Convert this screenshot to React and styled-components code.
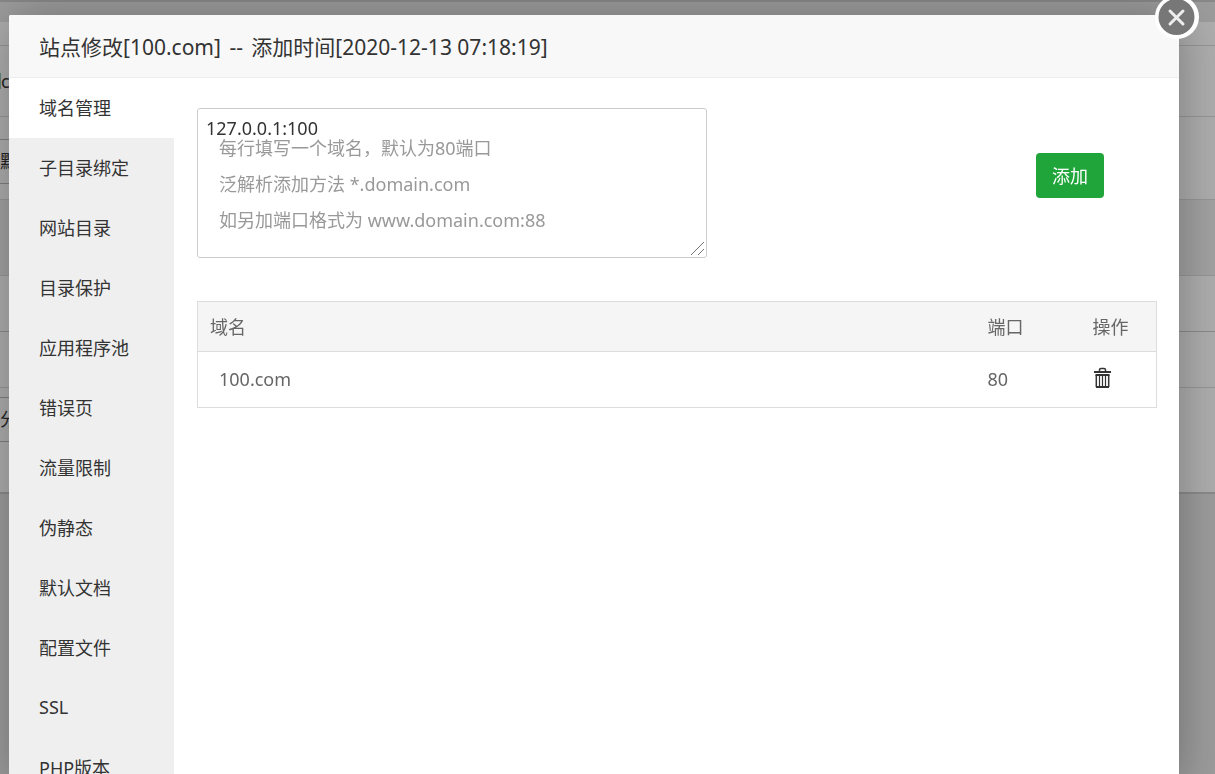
import { useState } from "react";
import styled, { createGlobalStyle } from "styled-components";

const GlobalStyle = createGlobalStyle`
  * {
    box-sizing: border-box;
  }

  body {
    margin: 0;
    overflow: hidden;
    background-color: #e6e6e6;
    color: #333;
    font-family: "Noto Sans", "Noto Sans CJK SC", sans-serif;
    font-size: 18px;
  }
`;

const Page = styled.div`
  padding-top: 20px;
  border-top: 2px solid #c8c8c8;
`;

const Panel = styled.section`
  background-color: #fff;
  border-bottom: 2px solid #ccc;
`;

const PanelRow = styled.div`
  display: flex;
  align-items: ${({ $align }) => $align || "center"};
  height: ${({ $height }) => $height}px;
  padding-top: ${({ $top }) => $top || 0}px;
  border-bottom: 1px solid ${({ $line }) => $line || "#ddd"};
  background-color: ${({ $shaded }) => ($shaded ? "#eee" : "transparent")};
  white-space: nowrap;
`;

const PanelLabel = styled.span`
  border-left: 1px solid #8fc8bb;
  line-height: 16px;
`;

const PanelField = styled.span`
  width: 120px;
  border: 1px solid #bbb;
  border-left: none;
  line-height: 43px;
`;

const Overlay = styled.div`
  position: fixed;
  inset: 0;
  padding: 15px 36px 0 9px;
  background-color: rgba(0, 0, 0, 0.32);
`;

const Dialog = styled.div`
  position: relative;
  display: flex;
  flex-direction: column;
  height: 100vh;
  border-radius: 2px;
  background-color: #fff;
  box-shadow: 1px 1px 50px rgba(0, 0, 0, 0.3);
`;

const DialogTitle = styled.h1`
  flex: none;
  margin: 0;
  padding: 2px 30px 0;
  border-bottom: 1px solid #eee;
  border-radius: 2px 2px 0 0;
  background-color: #f8f8f8;
  font-size: 21px;
  font-weight: 400;
  line-height: 60px;

  span {
    padding: 0 3px;
  }
`;

const CloseButton = styled.button`
  position: absolute;
  top: -20px;
  right: -20px;
  display: flex;
  padding: 0;
  border: none;
  background: none;
  cursor: pointer;
`;

const DialogBody = styled.div`
  display: flex;
  flex: 1;
  min-height: 0;
`;

const Menu = styled.nav`
  flex: none;
  width: 165px;
  overflow: hidden;
  background-color: #efefef;
`;

const MenuItem = styled.button`
  display: block;
  width: 100%;
  height: 60px;
  padding: 0 30px 2px;
  border: none;
  background-color: ${({ $active }) => ($active ? "#fff" : "transparent")};
  color: #333;
  font: inherit;
  text-align: left;
  cursor: pointer;
`;

const Content = styled.main`
  flex: 1;
  padding: 30px 22px 30px 23px;
`;

const AddForm = styled.form`
  display: flex;
  align-items: flex-start;
  justify-content: space-between;
  margin-bottom: 43px;
  padding-right: 53px;
`;

const DomainField = styled.div`
  position: relative;
  width: 510px;
`;

const DomainInput = styled.textarea`
  display: block;
  width: 100%;
  height: 150px;
  padding: 6px 8px;
  border: 1px solid #ccc;
  border-radius: 3px;
  outline: none;
  color: #333;
  font: inherit;
  line-height: 26px;

  &::-webkit-resizer {
    background: linear-gradient(
        135deg,
        transparent 47%,
        #777 47%,
        #777 53%,
        transparent 53%,
        transparent 74%,
        #777 74%,
        #777 80%,
        transparent 80%
      )
      0 0 / 13px 13px no-repeat;
  }
`;

const DomainHint = styled.label`
  position: absolute;
  top: 22px;
  left: 22px;
  color: #999;
  line-height: 36px;
  pointer-events: none;

  span {
    display: block;
  }
`;

const AddButton = styled.button`
  height: 45px;
  margin-top: 45px;
  padding: 0 16px 2px;
  border: none;
  border-radius: 4px;
  background-color: #20a53a;
  color: #fff;
  font: inherit;
  cursor: pointer;
`;

const DomainTable = styled.table`
  width: 100%;
  border: 1px solid #ddd;
  border-collapse: collapse;
  table-layout: fixed;
  color: #666;
  text-align: left;

  th {
    height: 50px;
    padding: 0 12px 2px;
    border-bottom: 1px solid #ddd;
    background-color: #f5f5f5;
    font-weight: 400;
  }

  td {
    height: 56px;
    padding: 0 12px 2px;
  }

  td:first-child {
    padding-left: 21px;
  }

  th:nth-child(2) {
    width: 105px;
  }

  th:nth-child(3) {
    width: 76px;
  }
`;

const DeleteButton = styled.button`
  display: flex;
  padding: 0 0 2px;
  border: none;
  background: none;
  color: #333;
  cursor: pointer;
`;

const menuItems = [
  "域名管理",
  "子目录绑定",
  "网站目录",
  "目录保护",
  "应用程序池",
  "错误页",
  "流量限制",
  "伪静态",
  "默认文档",
  "配置文件",
  "SSL",
  "PHP版本",
];

const domains = [{ name: "100.com", port: 80 }];

const CloseIcon = () => (
  <svg width="44" height="44" viewBox="0 0 44 44" fill="none" aria-hidden="true">
    <circle cx="22" cy="22" r="22" fill="#fff" />
    <circle cx="21.5" cy="22" r="18" fill="#777" />
    <path d="M15 16l13 13M28 16l-13 13" stroke="#eee" strokeWidth="3" strokeLinecap="round" />
  </svg>
);

const TrashIcon = () => (
  <svg width="20" height="22" viewBox="0 0 20 22" fill="none" aria-hidden="true">
    <path d="M6.5 4V2.800Q6.500 1.500 8 1.500h3Q12.500 1.500 12.500 2.800V4" stroke="currentColor" strokeWidth="1.500" />
    <path d="M1 5h17" stroke="currentColor" strokeWidth="2" />
    <path d="M2.500 8h14M3 20h13" stroke="currentColor" strokeWidth="2" />
    <path d="M3.300 8v12M15.700 8v12" stroke="currentColor" strokeWidth="1.500" />
    <path d="M6.500 8v12M9.500 8v12M12.500 8v12" stroke="currentColor" strokeWidth="1.200" />
  </svg>
);

const App = () => {
  const [active, setActive] = useState(menuItems[0]);
  const [value, setValue] = useState("127.0.0.1:100");

  return (
    <>
      <GlobalStyle />
      <Page aria-hidden="true">
        <Panel>
          <PanelRow $height={24} />
          <PanelRow $height={71}>
            <PanelLabel>c</PanelLabel>
          </PanelRow>
          <PanelRow $height={83} $align="flex-start" $top={22}>
            <PanelField>默</PanelField>
          </PanelRow>
          <PanelRow $height={76} $shaded />
          <PanelRow $height={56} $line="#ccc" />
          <PanelRow $height={56} />
          <PanelRow $height={104} $line="#fff" $align="flex-start" $top={9}>
            <PanelField>分</PanelField>
          </PanelRow>
        </Panel>
      </Page>
      <Overlay>
        <Dialog role="dialog" aria-labelledby="dialog-title">
          <DialogTitle id="dialog-title">
            站点修改[100.com] <span>--</span> 添加时间[2020-12-13 07:18:19]
          </DialogTitle>
          <CloseButton type="button" aria-label="关闭">
            <CloseIcon />
          </CloseButton>
          <DialogBody>
            <Menu>
              {menuItems.map((item) => (
                <MenuItem
                  key={item}
                  type="button"
                  $active={item === active}
                  onClick={() => setActive(item)}
                >
                  {item}
                </MenuItem>
              ))}
            </Menu>
            <Content>
              <AddForm onSubmit={(e) => e.preventDefault()}>
                <DomainField>
                  <DomainInput
                    id="domains"
                    value={value}
                    spellCheck={false}
                    onChange={(e) => setValue(e.target.value)}
                  />
                  <DomainHint htmlFor="domains">
                    <span>每行填写一个域名，默认为80端口</span>
                    <span>泛解析添加方法 *.domain.com</span>
                    <span>如另加端口格式为 www.domain.com:88</span>
                  </DomainHint>
                </DomainField>
                <AddButton type="submit">添加</AddButton>
              </AddForm>
              <DomainTable>
                <thead>
                  <tr>
                    <th>域名</th>
                    <th>端口</th>
                    <th>操作</th>
                  </tr>
                </thead>
                <tbody>
                  {domains.map(({ name, port }) => (
                    <tr key={name}>
                      <td>{name}</td>
                      <td>{port}</td>
                      <td>
                        <DeleteButton type="button" aria-label="删除">
                          <TrashIcon />
                        </DeleteButton>
                      </td>
                    </tr>
                  ))}
                </tbody>
              </DomainTable>
            </Content>
          </DialogBody>
        </Dialog>
      </Overlay>
    </>
  );
};

export default App;
